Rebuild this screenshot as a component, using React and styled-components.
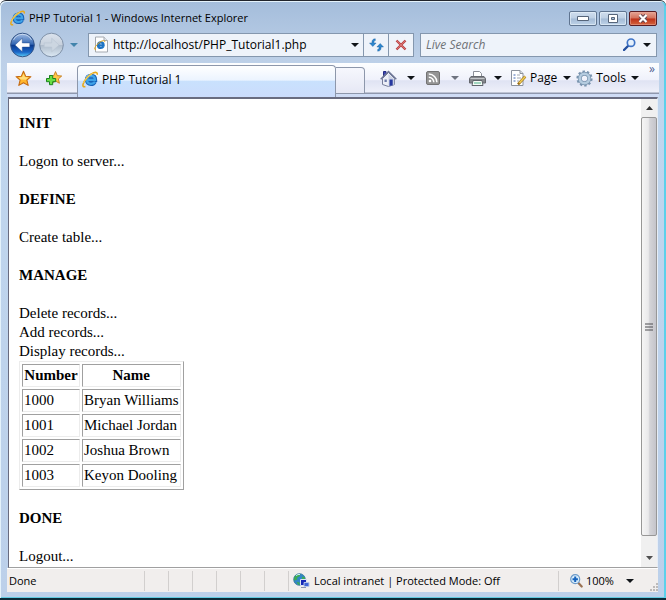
import {useState} from 'react';
import styled, {createGlobalStyle} from 'styled-components';

const GlobalStyle = createGlobalStyle`
    *{
        box-sizing: border-box;
    }
    body{
        margin: 0;
        font-family: "Open Sans", "Noto Sans", sans-serif;
        font-size: 12px;
        line-height: 16px;
        color: #000;
    }
    button, input{
        font: inherit;
        color: inherit;
        margin: 0;
        padding: 0;
        border: none;
        background: none;
    }
    svg{
        display: block;
        flex: none;
    }
`

const Window = styled.div`
    display: flex;
    flex-direction: column;
    height: 100vh;
    padding: 1px 7px 6px;
    background: linear-gradient(#a4bddb, #bdd0e8 60px, #c0d6ee 110px, #bcd0ea);
    border-top: 1px solid #20242c;
    border-bottom: 2px solid #0c2a38;
    border-radius: 6px 6px 0 0;
    box-shadow: inset 1px 1px #e4f2fb, inset -2px 0 #5cd0ea, inset 0 -1px #62cbe2;
`

const TitleBar = styled.header`
    display: flex;
    align-items: center;
    gap: 3px;
    height: 29px;
    padding: 3px 2px 0 3px;
`

const Title = styled.h1`
    flex: 1;
    margin: 0;
    font-size: 11px;
    font-weight: normal;
    white-space: nowrap;
`

const WindowButtons = styled.div`
    display: flex;
    gap: 2px;
`

const WindowButton = styled.button`
    display: flex;
    align-items: center;
    justify-content: center;
    width: 28px;
    height: 15px;
    border: 1px solid ${({$close}) => $close ? '#5a1c22' : '#5f7490'};
    border-radius: 2px;
    background: ${({$close}) => $close
        ? 'linear-gradient(#e5a595, #d4705a 48%, #bd3018 52%, #d4643e)'
        : 'linear-gradient(#d0deee, #bdcfe4 48%, #a3bad5 52%, #bed3e9)'};
    box-shadow: inset 0 0 0 1px ${({$close}) => $close ? '#e9a79a88' : '#e6f0f9aa'};
`

const NavBar = styled.nav`
    display: flex;
    align-items: center;
    height: 27px;
    padding: 0 2px 0 3px;
`

const RoundButtons = styled.div`
    display: flex;
    align-items: center;
    gap: 4px;
    width: 78px;
`

const IconButton = styled.button`
    display: flex;
    align-items: center;
    justify-content: center;
    gap: ${({$gap}) => $gap || 0}px;
    min-width: ${({$width}) => $width ? $width + 'px' : 'auto'};
    height: 22px;
    white-space: nowrap;
`

const Field = styled.div`
    display: flex;
    align-items: center;
    height: 24px;
    border: 1px solid #8497ae;
    background: #eef3fa;
    ${({$search}) => $search ? 'width: 237px;' : 'flex: 1;'}
    ${({$search}) => $search && 'margin-left: 6px;'}
    min-width: 0;
    padding-left: 4px;
`

const Input = styled.input`
    flex: 1;
    min-width: 0;
    height: 22px;
    padding: 0 ${({$italic}) => $italic ? 1 : 4}px;
    outline: none;
    font-style: ${({$italic}) => $italic ? 'italic' : 'normal'};
    &::placeholder{
        color: #6e7276;
        opacity: 1;
    }
`

const FieldButton = styled(IconButton)`
    border-left: ${({$line}) => $line ? '1px solid #8497ae' : 'none'};
`

const ToolBar = styled.div`
    display: flex;
    align-items: stretch;
    height: 34px;
    margin-top: 5px;
    background: linear-gradient(#fdfeff, #eff1fb 50%, #dfe3f3 52%, #eef0fa 29px, #8f98ae 30px, #8f98ae 31px, #cfdcf5 31px, #cfdcf5);
`

const Favorites = styled.div`
    display: flex;
    align-items: center;
    gap: 14px;
    width: 70px;
    height: 30px;
    padding-left: 8px;
`

const Tab = styled.button`
    display: flex;
    align-items: center;
    gap: 3px;
    flex: 1;
    min-width: 0;
    margin-top: 2px;
    padding: 0 4px 4px;
    border: 1px solid #8d97ab;
    border-bottom: none;
    border-radius: 4px 4px 0 0;
    background: linear-gradient(#fff, #ecf4ff 45%, #c9e1fd 50%, #cbdcfc);
    text-align: left;
`

const NewTab = styled.button`
    width: 29px;
    height: 27px;
    margin-top: 4px;
    border: 1px solid #8d97ab;
    border-left: none;
    border-radius: 0 4px 0 0;
    background: linear-gradient(#f6f7fd, #e6e8f5);
`

const Commands = styled.div`
    display: flex;
    align-items: center;
    height: 30px;
    padding-left: 15px;
`

const More = styled.button`
    align-self: flex-start;
    width: 14px;
    height: 12px;
    margin-left: 1px;
    color: #4c5c90;
    line-height: 12px;
`

const Viewport = styled.div`
    display: flex;
    flex: 1;
    min-height: 0;
    margin: 0 1px;
    border: 1px solid #696c80;
    border-top-width: 2px;
    border-right-color: #e6edf6;
    border-bottom-color: #a0a0a0;
    background: #fff;
`

const Page = styled.main`
    flex: 1;
    min-width: 0;
    overflow: hidden;
    padding: 15px 10px;
    font-family: "Liberation Serif", serif;
    font-size: 15px;
    line-height: 19px;
`

const Heading = styled.h2`
    margin: 0 0 19px;
    font-size: 15px;
    line-height: 19px;
`

const Text = styled.p`
    margin: 0 0 ${({$tight}) => $tight ? 0 : 19}px;
`

const Table = styled.table`
    margin-bottom: 19px;
    border-style: solid;
    border-width: 1px;
    border-color: #ececec #a0a0a0 #a0a0a0 #ececec;
    border-spacing: 2px;
    td, th{
        height: 23px;
        min-width: 58px;
        padding: 1px;
        border-style: solid;
        border-width: 1px;
        border-color: #a0a0a0 #ececec #ececec #a0a0a0;
        white-space: nowrap;
    }
`

const ScrollBar = styled.div`
    display: flex;
    flex-direction: column;
    width: 16px;
    background: #f0f0f0;
`

const ScrollButton = styled.button`
    display: flex;
    align-items: center;
    justify-content: center;
    height: 18px;
`

const Thumb = styled.div`
    display: flex;
    align-items: center;
    justify-content: center;
    flex: 1;
    margin-bottom: 13px;
    border: 1px solid #979797;
    border-radius: 2px;
    background: linear-gradient(90deg, #f5f5f5, #e9e9eb 45%, #d4d4d8 55%, #c4c4ca);
`

const StatusBar = styled.footer`
    display: flex;
    align-items: center;
    height: 24px;
    margin-right: 1px;
    padding-left: 2px;
    border-top: 1px solid #fff;
    background: #f1eeed;
    font-size: 11px;
    white-space: nowrap;
`

const Pane = styled.div`
    display: flex;
    align-items: center;
    gap: 4px;
    height: 20px;
    ${({$width}) => $width ? `width: ${$width}px;` : 'flex: 1;'}
    padding-left: ${({$pad}) => $pad || 0}px;
    border-left: ${({$first}) => $first ? 'none' : '1px solid #d2cfce'};
`

const ZoomButton = styled.button`
    display: flex;
    align-items: center;
    gap: 3px;
`

const Grip = styled.svg`
    align-self: flex-end;
    margin-left: auto;
`

const Caret = ({color = '#101418'}) => (
    <svg width="8" height="4" viewBox="0 0 8 4"><path d="M0 0h8L4 4z" fill={color} /></svg>
)

const IeLogo = ({size = 17}) => (
    <svg width={size} height={size} viewBox="0 0 17 17">
        <path d="M12.8 10.600c-.6 1.400-2 2.400-3.800 2.400-2.500 0-4.200-1.700-4.200-4.200S6.500 4.700 9 4.700c2.600 0 4.200 1.600 4.200 4.300H5" fill="none" stroke="#1763b8" strokeWidth="4" />
        <path d="M13 10.800c-.7 1.300-2.100 2-4 2-2.400 0-4-1.600-4-4s1.700-4 4-4c2.300 0 3.900 1.500 4 4H6" fill="none" stroke="#3fa3e8" strokeWidth="2.200" />
        <path d="M3.600 8.300C4.500 5.500 7 3.600 9.800 3.900" fill="none" stroke="#9be0fb" strokeWidth="1.100" />
        <path d="M3.400 15.600c-2 .6-2.900-.3-2.300-2.500C2.100 9.300 7 3.500 11.600 1.800c2.700-1 4-.2 3.500 1.900" fill="none" stroke="#e7a91c" strokeWidth="1.600" />
        <path d="M1.500 12C3 8.500 7.300 3.900 11 2.300" fill="none" stroke="#fbdf78" strokeWidth=".7" />
    </svg>
)

const PageLogo = () => (
    <svg width="16" height="17" viewBox="0 0 16 17">
        <path d="M2.500 1h8.500l3.500 3.500v11.500h-12z" fill="#fff" stroke="#a4a9b0" />
        <path d="M11 1v3.500h3.500" fill="#e3e7ec" stroke="#a4a9b0" />
        <path d="M10.400 10.500c-.5 1-1.400 1.500-2.600 1.500-1.700 0-2.800-1.200-2.800-2.800S6.100 6.400 7.800 6.400c1.700 0 2.800 1.100 2.800 2.900H5.500" fill="none" stroke="#1c73c4" strokeWidth="2.200" />
        <path d="M3 13.800c-1.600 0-1.700-1.200-.6-3C4.400 7.500 8 4.800 10.500 4.600c1.200 0 1.400.6 1.100 1.500" fill="none" stroke="#e2a51b" />
    </svg>
)

const BackIcon = () => (
    <svg width="25" height="26" viewBox="0 0 25 26">
        <defs>
            <linearGradient id="back" x1="0" y1="0" x2="0" y2="1">
                <stop offset="0" stopColor="#a3bde4" />
                <stop offset=".46" stopColor="#3468b4" />
                <stop offset=".52" stopColor="#0b3c91" />
                <stop offset=".8" stopColor="#1b67c8" />
                <stop offset="1" stopColor="#5ad0fa" />
            </linearGradient>
        </defs>
        <circle cx="12.500" cy="13" r="11.800" fill="url(#back)" stroke="#345487" />
        <path d="M3.500 8a10 10 0 0 1 18 0" fill="none" stroke="#dce8f7" strokeOpacity=".7" />
        <path d="M12.300 6.200 5 13l7.300 6.800v-4.700h7.500v-4.200h-7.500z" fill="#fff" stroke="#244f92" strokeWidth=".5" />
    </svg>
)

const ForwardIcon = () => (
    <svg width="25" height="26" viewBox="0 0 25 26">
        <defs>
            <linearGradient id="forward" x1="0" y1="0" x2="0" y2="1">
                <stop offset="0" stopColor="#dbe3ed" />
                <stop offset=".48" stopColor="#c8d1dd" />
                <stop offset=".52" stopColor="#b0bdcc" />
                <stop offset="1" stopColor="#dce9f4" />
            </linearGradient>
        </defs>
        <circle cx="12.500" cy="13" r="11.800" fill="url(#forward)" stroke="#7f91a8" />
        <path d="M12.700 6.200 20 13l-7.300 6.800v-4.700H5.200v-4.200h7.500z" fill="#ccd6e1" stroke="#bac6d4" strokeWidth=".7" />
    </svg>
)

const RefreshIcon = () => (
    <svg width="15" height="14" viewBox="0 0 15 14">
        <path d="M6.300.8C3.600 1 2.900 2.200 2.900 5H.5l3.300 3.500L7.100 5H4.900c0-1.600.2-2 1.400-2.400z" fill="#2d86cd" stroke="#155a9c" strokeWidth=".4" />
        <path d="M8.700 13.200c2.700-.2 3.400-1.400 3.400-4.200h2.400l-3.300-3.500L7.900 9h2.200c0 1.600-.2 2-1.400 2.400z" fill="#2d86cd" stroke="#155a9c" strokeWidth=".4" />
    </svg>
)

const StopIcon = () => (
    <svg width="12" height="12" viewBox="0 0 12 12">
        <path d="m1.500 1.500 9 9M10.500 1.500l-9 9" fill="none" stroke="#bb4244" strokeWidth="2.400" />
        <path d="m2 2 8 8M10 2l-8 8" fill="none" stroke="#e07d7b" strokeWidth=".8" />
    </svg>
)

const SearchIcon = () => (
    <svg width="13" height="13" viewBox="0 0 13 13">
        <path d="m5 8-4 4" stroke="#244f9e" strokeWidth="2.400" strokeLinecap="round" />
        <circle cx="8" cy="4.700" r="3.700" fill="#e6f1fc" stroke="#3f74c6" strokeWidth="1.700" />
    </svg>
)

const starPath = 'M8 1.200 10 5.800l5 .5-3.800 3.300 1.200 4.900L8 12l-4.400 2.500 1.200-4.900L1 6.300l5-.5z'

const StarIcon = () => (
    <svg width="17" height="17" viewBox="0 0 16 16">
        <path d={starPath} fill="#ffb52c" stroke="#c46a12" strokeLinejoin="round" />
        <path d="M8 3.500 9.300 6.700l3.300.4-2.400 2-4.800-.2L3.500 7.100l3.200-.4z" fill="#ffde7a" />
    </svg>
)

const AddStarIcon = () => (
    <svg width="17" height="17" viewBox="0 0 17 17">
        <path d={starPath} transform="translate(2.500 .5) scale(.88)" fill="#ffc648" stroke="#c17a1c" strokeLinejoin="round" />
        <path d="M3.500 5.500h3.200v3h3v3.200h-3v3H3.500v-3h-3V8.500h3z" fill="#6ade44" stroke="#1b8320" />
    </svg>
)

const HomeIcon = () => (
    <svg width="17" height="17" viewBox="0 0 17 17">
        <path d="M3.500 1.500H6v5H3.500z" fill="#3e47b8" stroke="#262c83" />
        <path d="M2.500 8.500v6l6 2 6-2v-6l-6-6z" fill="#eceef6" stroke="#777e9a" />
        <path d="M8.500 16.200V4l5.700 5v5.400z" fill="#cbd2e4" />
        <path d="m.7 9.200 7.800-7.700 7.800 7.700" fill="none" stroke="#6d7696" strokeWidth="1.500" />
        <path d="M9.500 9.500h3.200v5.800l-3.200.8z" fill="#2638a0" />
        <path d="M4.500 9.500h2.300V12H4.500z" fill="#6d7ba8" />
    </svg>
)

const RssIcon = () => (
    <svg width="14" height="14" viewBox="0 0 14 14">
        <rect x=".5" y=".5" width="13" height="13" rx="1.500" fill="#949494" stroke="#737373" />
        <circle cx="4" cy="10" r="1.300" fill="#fff" />
        <path d="M2.800 6.200a5 5 0 0 1 5 5M2.800 3.100a8.100 8.100 0 0 1 8.100 8.100" fill="none" stroke="#fff" strokeWidth="1.500" />
    </svg>
)

const PrinterIcon = () => (
    <svg width="17" height="15" viewBox="0 0 17 15">
        <path d="M4.500 6V.5h6l2 2V6" fill="#fff" stroke="#8b8f98" />
        <path d="M2 5.500h13l1.500 2v4.500H.5V7.500z" fill="#85878c" stroke="#64676e" />
        <path d="M1.500 7.500h14" stroke="#c3c6ca" />
        <path d="M4 9.500h9l1 5H3z" fill="#f4fbf5" stroke="#5f646b" />
        <path d="M5 12h7" stroke="#4fb08b" />
    </svg>
)

const EditPageIcon = () => (
    <svg width="17" height="16" viewBox="0 0 17 16">
        <path d="M1.500.5H10l3 3v12H1.500z" fill="#fff" stroke="#8c929c" />
        <path d="M10 .5v3h3" fill="#dfe3e9" stroke="#8c929c" />
        <path d="M3.500 5h2M3.500 8h2M3.500 11h2" stroke="#3d63b0" />
        <path d="M7 5h3M7 8h4M7 11h2" stroke="#a2a7b0" />
        <path d="m15.300 6.500-6 6.500-1.300 1.300" stroke="#9a6c16" strokeWidth="2.600" />
        <path d="m15.300 6.500-6 6.500" stroke="#f2cf55" strokeWidth="1.600" />
    </svg>
)

const GearIcon = () => (
    <svg width="17" height="17" viewBox="0 0 17 17">
        <circle cx="8.500" cy="8.500" r="7" fill="none" stroke="#7893ae" strokeWidth="2.200" strokeDasharray="2.400 2" />
        <circle cx="8.500" cy="8.500" r="4.700" fill="none" stroke="#7893ae" strokeWidth="4" />
        <circle cx="8.500" cy="8.500" r="4.700" fill="none" stroke="#b4cbdf" strokeWidth="2.600" />
    </svg>
)

const NetworkIcon = () => (
    <svg width="17" height="16" viewBox="0 0 17 16">
        <circle cx="6.500" cy="6.500" r="5.800" fill="#3186c8" stroke="#2a6c96" strokeWidth=".8" />
        <path d="M2 3.200c1.500-2 4-2.300 5.500-1.800L6.500 3.500l-2 .8-.5 2.500L1 7.500c-.2-1.500.2-3 1-4.300zM9 3.500l2.700.8.3 3-3-.8zM3.500 9l3 .5.200 2.500-1.700-.4z" fill="#3dac54" />
        <path d="M3 2.600Q5 1 7 1.500" fill="none" stroke="#c9eff5" />
        <path d="M7.500 6.500h6v6h-6z" fill="#1527b5" stroke="#dce4f5" />
        <path d="M11 9.500h5v4h-5z" fill="#4065d6" stroke="#b7c5e8" />
        <path d="M8 14.500h5" stroke="#8b96b0" />
    </svg>
)

const ZoomIcon = () => (
    <svg width="13" height="14" viewBox="0 0 13 14">
        <path d="m8 8.500 3.700 4" stroke="#9a7253" strokeWidth="2.200" strokeLinecap="round" />
        <circle cx="5.200" cy="5.200" r="4.500" fill="#d9edfb" stroke="#6d9ac8" strokeWidth="1.200" />
        <path d="M5.200 2.500v5.400M2.500 5.200h5.400" stroke="#1763bd" strokeWidth="2" />
    </svg>
)

const commands = [
    {name: 'Home', icon: <HomeIcon />, width: 17, caretWidth: 27},
    {name: 'Feeds', icon: <RssIcon />, width: 17, caretWidth: 28, caret: '#6f7480'},
    {name: 'Print', icon: <PrinterIcon />, width: 17, caretWidth: 24},
    {name: 'Page', icon: <EditPageIcon />, label: true, caretWidth: 19},
    {name: 'Tools', icon: <GearIcon />, label: true, caretWidth: 18}
]

const records = [
    {number: 1000, name: 'Bryan Williams'},
    {number: 1001, name: 'Michael Jordan'},
    {number: 1002, name: 'Joshua Brown'},
    {number: 1003, name: 'Keyon Dooling'}
]

const App = () =>{
    const [address, setAddress] = useState('http://localhost/PHP_Tutorial1.php');
    const [search, setSearch] = useState('');
    return <>
        <GlobalStyle />
        <Window>
            <TitleBar>
                <IeLogo size={16} />
                <Title>PHP Tutorial 1 - Windows Internet Explorer</Title>
                <WindowButtons>
                    <WindowButton aria-label="Minimize">
                        <svg width="12" height="6" viewBox="0 0 12 6"><path d="M.5 1.500h11v4H.5z" fill="#fff" stroke="#56657a" /></svg>
                    </WindowButton>
                    <WindowButton aria-label="Maximize">
                        <svg width="12" height="9" viewBox="0 0 12 9"><path d="M1.500.5h9v8h-9z" fill="#fff" stroke="#56657a" /><path d="M4.500 3.500h3v2h-3z" fill="#a9bfd8" stroke="#56657a" /></svg>
                    </WindowButton>
                    <WindowButton $close aria-label="Close">
                        <svg width="12" height="9" viewBox="0 0 12 9"><path d="m3 1.500 6 6M9 1.500l-6 6" stroke="#5e4550" strokeWidth="4" /><path d="m2.500 1 7 7M9.500 1l-7 7" stroke="#fff" strokeWidth="2.200" /></svg>
                    </WindowButton>
                </WindowButtons>
            </TitleBar>
            <NavBar>
                <RoundButtons>
                    <IconButton aria-label="Back"><BackIcon /></IconButton>
                    <IconButton aria-label="Forward"><ForwardIcon /></IconButton>
                    <IconButton $width={12} aria-label="Recent pages"><Caret color="#4284ac" /></IconButton>
                </RoundButtons>
                <Field>
                    <PageLogo />
                    <Input aria-label="Address" value={address} onChange={event => setAddress(event.target.value)} />
                    <IconButton $width={17} aria-label="Show addresses"><Caret /></IconButton>
                    <FieldButton $line $width={25} aria-label="Refresh"><RefreshIcon /></FieldButton>
                    <FieldButton $line $width={25} aria-label="Stop"><StopIcon /></FieldButton>
                </Field>
                <Field $search>
                    <Input $italic aria-label="Search" placeholder="Live Search" value={search} onChange={event => setSearch(event.target.value)} />
                    <IconButton $width={18} aria-label="Search the web"><SearchIcon /></IconButton>
                    <IconButton $width={18} aria-label="Search options"><Caret /></IconButton>
                </Field>
            </NavBar>
            <ToolBar>
                <Favorites>
                    <IconButton aria-label="Favorites Center"><StarIcon /></IconButton>
                    <IconButton aria-label="Add to Favorites"><AddStarIcon /></IconButton>
                </Favorites>
                <Tab><IeLogo />PHP Tutorial 1</Tab>
                <NewTab aria-label="New tab" />
                <Commands>
                    {
                        commands.map(({name, icon, width, label, caret, caretWidth}) => [
                            <IconButton key={name} $gap={3} $width={width} aria-label={name}>{icon}{label && name}</IconButton>,
                            <IconButton key={name + 'Menu'} $width={caretWidth} aria-label={name + ' menu'}><Caret color={caret} /></IconButton>
                        ])
                    }
                </Commands>
                <More aria-label="More commands">»</More>
            </ToolBar>
            <Viewport>
                <Page>
                    <Heading>INIT</Heading>
                    <Text>Logon to server...</Text>
                    <Heading>DEFINE</Heading>
                    <Text>Create table...</Text>
                    <Heading>MANAGE</Heading>
                    <Text $tight>Delete records...</Text>
                    <Text $tight>Add records...</Text>
                    <Text $tight>Display records...</Text>
                    <Table>
                        <thead>
                            <tr><th>Number</th><th>Name</th></tr>
                        </thead>
                        <tbody>
                            {
                                records.map(({number, name}) => <tr key={number}><td>{number}</td><td>{name}</td></tr>)
                            }
                        </tbody>
                    </Table>
                    <Heading>DONE</Heading>
                    <Text $tight>Logout...</Text>
                </Page>
                <ScrollBar>
                    <ScrollButton aria-label="Scroll up">
                        <svg width="7" height="4" viewBox="0 0 7 4"><path d="M0 4h7L3.500 0z" fill="#303030" /></svg>
                    </ScrollButton>
                    <Thumb>
                        <svg width="8" height="8" viewBox="0 0 8 8"><path d="M0 1h8M0 4h8M0 7h8" stroke="#4c4c50" /></svg>
                    </Thumb>
                    <ScrollButton aria-label="Scroll down">
                        <svg width="7" height="4" viewBox="0 0 7 4"><path d="M0 0h7L3.500 4z" fill="#505050" /></svg>
                    </ScrollButton>
                </ScrollBar>
            </Viewport>
            <StatusBar>
                <Pane $first>Done</Pane>
                <Pane $width={24} />
                <Pane $width={24} />
                <Pane $width={24} />
                <Pane $width={24} />
                <Pane $width={24} />
                <Pane $width={24} />
                <Pane $width={270} $pad={4}><NetworkIcon />Local intranet | Protected Mode: Off</Pane>
                <Pane $width={100} $pad={11}>
                    <ZoomButton><ZoomIcon />100%</ZoomButton>
                    <IconButton $width={24} aria-label="Zoom level"><Caret /></IconButton>
                    <Grip width="8" height="8" viewBox="0 0 8 8"><path d="M6 0h2v2H6zM3 3h2v2H3zM6 3h2v2H6zM0 6h2v2H0zM3 6h2v2H3zM6 6h2v2H6z" fill="#bdbab9" /></Grip>
                </Pane>
            </StatusBar>
        </Window>
    </>
}

export default App;
